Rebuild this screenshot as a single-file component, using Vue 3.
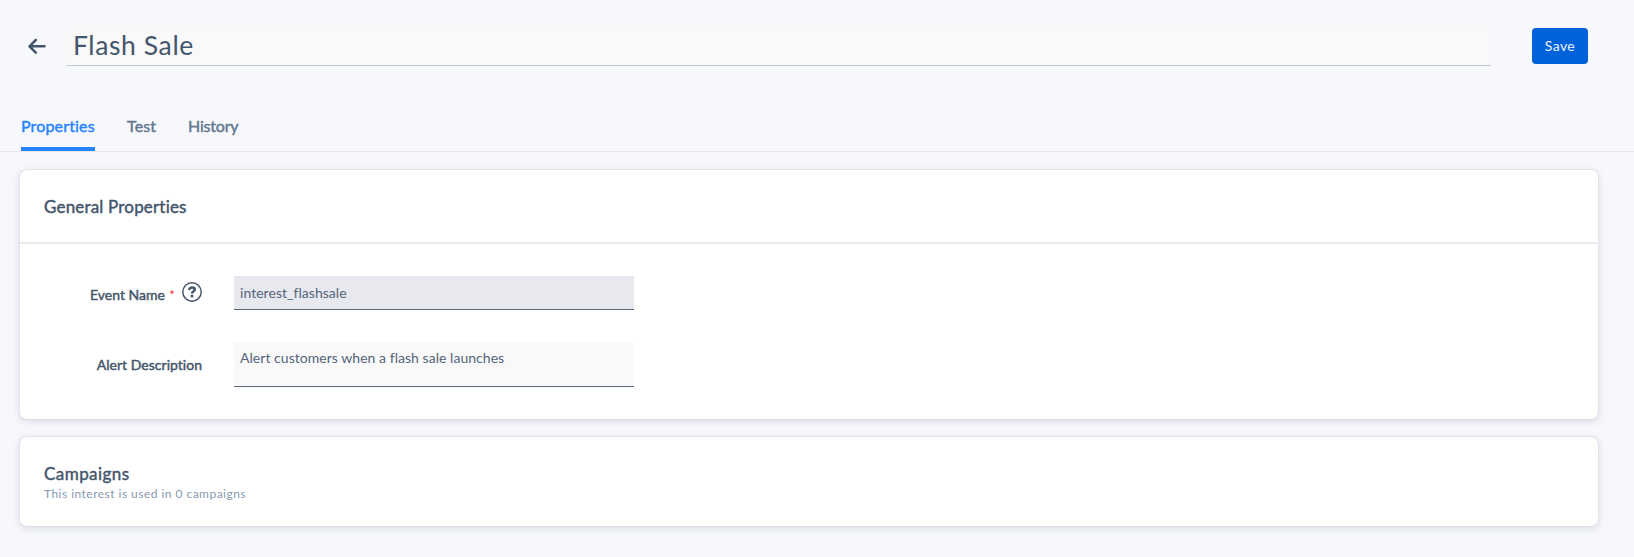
<script setup>
import { ref } from 'vue'

const title = ref('Flash Sale')
const eventName = ref('interest_flashsale')
const description = ref('Alert customers when a flash sale launches')
const active = ref('Properties')
const tabs = ['Properties', 'Test', 'History']
</script>

<template>
  <div class="page">
    <header class="topbar">
      <button class="back" aria-label="Back">
        <svg width="18" height="16" viewBox="0 0 18 16" fill="none" stroke="currentColor" stroke-width="2.5" stroke-linecap="round" stroke-linejoin="round">
          <path d="M16.5 8.3H1.8M7.8 2L1.5 8.3L7.8 14.6" />
        </svg>
      </button>
      <input v-model="title" class="title" aria-label="Title" />
      <button class="save">Save</button>
    </header>

    <nav class="tabs">
      <a v-for="t in tabs" :key="t" class="tab" :class="[t.toLowerCase(), { active: t === active }]" @click="active = t">{{ t }}</a>
    </nav>

    <section class="card general">
      <div class="card-head"><h2 class="heading">General Properties</h2></div>
      <div class="form">
        <div class="row">
          <label class="label name-label">
            <span class="event">Event Name</span>
            <span class="required">*</span>
            <svg class="help" width="20" height="20" viewBox="0 0 20 20" fill="none" stroke="currentColor">
              <circle cx="10" cy="10" r="9.2" stroke-width="1.5" />
              <path d="M7.1 8C7.4 6.2 8.6 5.5 10.1 5.5C11.8 5.5 12.8 6.3 12.8 7.5C12.8 9.4 10 9.2 10 11.6" stroke-width="2.5" />
              <circle cx="10" cy="14.1" r="1.5" fill="currentColor" stroke="none" />
            </svg>
          </label>
          <input v-model="eventName" class="field event-field" readonly />
        </div>
        <div class="row second">
          <label class="label desc-label">Alert Description</label>
          <textarea v-model="description" class="field desc-field"></textarea>
        </div>
      </div>
    </section>

    <section class="card campaigns">
      <h2 class="heading camp">Campaigns</h2>
      <p class="sub">This interest is used in 0 campaigns</p>
    </section>
  </div>
</template>

<style>
body {
  background: #f7f8fc;
}
</style>

<style scoped>
.page {
  box-sizing: border-box;
  height: 557px;
  overflow: hidden;
  background: #f7f8fc;
  color: #44566c;
  font-family: Lato, "Open Sans", sans-serif;
}
button, input, textarea {
  box-sizing: border-box;
  margin: 0;
  border: 0;
  border-radius: 0;
  outline: 0;
  font-family: inherit;
  color: inherit;
}
.topbar {
  display: flex;
  align-items: flex-start;
  padding: 28px 46px 0 28px;
  height: 113px;
  box-sizing: border-box;
}
.back {
  width: 38px;
  height: 36px;
  padding: 0;
  background: none;
  display: flex;
  align-items: center;
}
.title {
  flex: 1;
  height: 38px;
  padding: 0 7px 4px;
  background: #f9f9f9;
  border-bottom: 1px solid #c3c8d3;
  font-size: 26.5px;
  letter-spacing: 0.6px;
}
.save {
  width: 56px;
  height: 36px;
  margin-left: 41px;
  padding: 0 0 1px;
  border-radius: 4px;
  background: #0062d9;
  color: #eef4fd;
  font-size: 14px;
  letter-spacing: 0.4px;
}
.tabs {
  display: flex;
  gap: 32px;
  height: 39px;
  box-sizing: border-box;
  padding-left: 21px;
  border-bottom: 1px solid #e5e7ec;
}
.tab {
  box-sizing: border-box;
  height: 38px;
  line-height: 26px;
  font-size: 16px;
  letter-spacing: 0.15px;
  -webkit-text-stroke: 0.45px currentColor;
  color: #62788f;
  white-space: nowrap;
}
.tab.active {
  color: #2684ff;
  border-bottom: 4px solid #2684ff;
}
.properties { width: 74px; }
.test { width: 29px; }
.history { letter-spacing: -0.2px; }
.card {
  box-sizing: border-box;
  width: 1580px;
  margin-left: 19px;
  border: 1px solid #e0e3ea;
  border-bottom-color: #dcdfe4;
  border-radius: 8px;
  background: #fff;
  box-shadow: 0 2px 7px rgba(60, 75, 100, 0.15);
}
.general {
  margin-top: 17px;
  height: 251px;
}
.card-head {
  height: 47px;
  border-bottom: 2px solid #e8eaed;
  padding: 25px 24px 0;
}
.heading {
  margin: 0;
  font-size: 17px;
  line-height: 24px;
  font-weight: 400;
  letter-spacing: 0.18px;
  -webkit-text-stroke: 0.45px currentColor;
}
.camp {
  letter-spacing: 0.45px;
}
.form {
  padding: 32px 0 0 24px;
}
.row {
  display: flex;
  align-items: flex-start;
}
.second {
  margin-top: 32px;
}
.label {
  display: flex;
  justify-content: flex-end;
  width: 158px;
  margin-right: 32px;
  font-size: 14px;
  line-height: 20px;
  letter-spacing: 0.02px;
  -webkit-text-stroke: 0.45px currentColor;
  white-space: nowrap;
}
.name-label { padding-top: 8px; }
.desc-label { padding-top: 13px; }
.event { padding-top: 1px; }
.required {
  color: #f5333f;
  -webkit-text-stroke: 0;
  margin-left: 4px;
  width: 5px;
  padding-top: 1px;
}
.help {
  margin: -2px 0 0 8px;
}
.field {
  width: 400px;
  padding: 0 6px;
  border-bottom: 1px solid #5a6b80;
  font-size: 14px;
  line-height: 20px;
  letter-spacing: 0.04px;
  color: #54657a;
  resize: none;
}
.event-field {
  height: 34px;
  background: #e8e9ee;
}
.desc-field {
  height: 45px;
  padding-top: 6px;
  background: #f9f9f9;
  overflow: hidden;
}
.campaigns {
  margin-top: 16px;
  height: 91px;
  padding: 25px 24px 0;
}
.sub {
  margin: 0;
  font-size: 12px;
  line-height: 16px;
  letter-spacing: 0.47px;
  color: #8699b0;
}
</style>
